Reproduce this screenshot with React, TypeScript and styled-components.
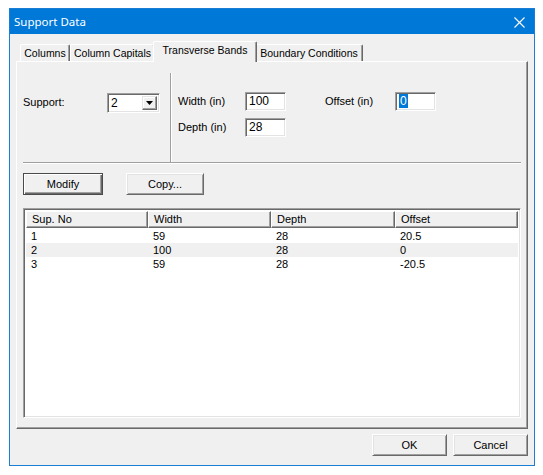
import styled, { createGlobalStyle } from "styled-components";

const Global = createGlobalStyle`
    html, body {
        margin: 0;
        background: #ffffff;
    }
    body {
        padding: 8px 9px;
        font-family: "Liberation Sans", Arial, sans-serif;
        font-size: 11px;
        color: #000;
    }
`;

type Row = { sup: string; width: string; depth: string; offset: string };

const rows: Row[] = [
    { sup: "1", width: "59", depth: "28", offset: "20.5" },
    { sup: "2", width: "100", depth: "28", offset: "0" },
    { sup: "3", width: "59", depth: "28", offset: "-20.5" },
];

const tabs = [
    { label: "Columns", w: 50 },
    { label: "Column Capitals", w: 85 },
    { label: "Transverse Bands", w: 104, active: true },
    { label: "Boundary Conditions", w: 108 },
];

const App = () => {
    return (
        <>
            <Global />
            <Window>
                <TitleBar>
                    <Title>Support Data</Title>
                    <CloseBtn>
                        <svg width="11" height="11" viewBox="0 0 11 11">
                            <path d="M0.5 0.5 L10.5 10.5 M10.5 0.5 L0.5 10.5" stroke="#fff" strokeWidth="1.1" />
                        </svg>
                    </CloseBtn>
                </TitleBar>
                <Body>
                    <TabStrip>
                        {tabs.map((t) => (
                            <Tab key={t.label} $w={t.w} $active={!!t.active}>
                                {t.label}
                            </Tab>
                        ))}
                    </TabStrip>
                    <Panel>
                        <TopSection>
                            <LeftPane>
                                <Label $w={84}>Support:</Label>
                                <Combo>
                                    <ComboText>2</ComboText>
                                    <DropBtn>
                                        <svg width="7" height="4" viewBox="0 0 7 4">
                                            <path d="M0 0 H7 L3.5 4 Z" fill="#000" />
                                        </svg>
                                    </DropBtn>
                                </Combo>
                            </LeftPane>
                            <VSep />
                            <RightPane>
                                <Label>Width (in)</Label>
                                <Field>100</Field>
                                <span />
                                <Label>Offset (in)</Label>
                                <Field>
                                    <Selected>0</Selected>
                                </Field>
                                <Label>Depth (in)</Label>
                                <Field>28</Field>
                            </RightPane>
                        </TopSection>
                        <HSep />
                        <ButtonRow>
                            <Button $w={80} $default>
                                Modify
                            </Button>
                            <Button $w={78}>Copy...</Button>
                        </ButtonRow>
                        <ListView>
                            <HeaderRow>
                                <HeaderCell>Sup. No</HeaderCell>
                                <HeaderCell>Width</HeaderCell>
                                <HeaderCell>Depth</HeaderCell>
                                <HeaderCell>Offset</HeaderCell>
                            </HeaderRow>
                            <ListBody>
                                {rows.map((r, i) => (
                                    <DataRow key={r.sup} $alt={i % 2 === 1}>
                                        <Cell>{r.sup}</Cell>
                                        <Cell>{r.width}</Cell>
                                        <Cell>{r.depth}</Cell>
                                        <Cell>{r.offset}</Cell>
                                    </DataRow>
                                ))}
                            </ListBody>
                        </ListView>
                    </Panel>
                    <Footer>
                        <Button $w={75}>OK</Button>
                        <Button $w={75}>Cancel</Button>
                    </Footer>
                </Body>
            </Window>
        </>
    );
};

const Window = styled.div`
    width: 526px;
    height: 458px;
    box-sizing: border-box;
    border: 1px solid #1a7fd4;
    background: #f0f0f0;
    display: flex;
    flex-direction: column;
`;

const TitleBar = styled.div`
    height: 25px;
    background: #0078d7;
    display: flex;
    align-items: center;
    justify-content: space-between;
    padding: 0 9px 0 4px;
`;

const Title = styled.span`
    font-family: "Noto Sans", "Liberation Sans", sans-serif;
    font-size: 11.5px;
    color: #fff;
    padding-bottom: 1px;
`;

const CloseBtn = styled.span`
    display: flex;
    align-items: center;
    margin-top: 1px;
`;

const Body = styled.div`
    flex: 1;
    display: flex;
    flex-direction: column;
    padding: 7px 6px 0 6px;
`;

const TabStrip = styled.div`
    display: flex;
    align-items: flex-end;
    height: 20px;
    padding-left: 4px;
    position: relative;
    z-index: 1;
`;

const Tab = styled.div<{ $w: number; $active: boolean }>`
    width: ${(p) => p.$w}px;
    height: ${(p) => (p.$active ? 21 : 17)}px;
    box-sizing: border-box;
    margin: ${(p) => (p.$active ? "0 -2px -1px -2px" : "0")};
    background: #f0f0f0;
    border-top: 1px solid #fff;
    border-left: 1px solid #fff;
    border-right: 1px solid #696969;
    box-shadow: inset -1px 0 0 #a0a0a0;
    border-radius: 2px 2px 0 0;
    display: flex;
    align-items: ${(p) => (p.$active ? "flex-start" : "center")};
    justify-content: center;
    padding-top: ${(p) => (p.$active ? "2px" : "0")};
    font-size: 10.5px;
    white-space: nowrap;
    position: relative;
    z-index: ${(p) => (p.$active ? 2 : 1)};
`;

const Panel = styled.div`
    width: 512px;
    height: 368px;
    box-sizing: border-box;
    border-top: 1px solid #fff;
    border-left: 1px solid #fff;
    border-right: 1px solid #696969;
    border-bottom: 1px solid #696969;
    box-shadow: inset -1px -1px 0 #a0a0a0;
    padding: 0 6px;
    display: flex;
    flex-direction: column;
`;

const TopSection = styled.div`
    display: flex;
    height: 100px;
`;

const LeftPane = styled.div`
    width: 147px;
    padding-top: 31px;
    display: flex;
    align-items: flex-start;
`;

const Label = styled.span<{ $w?: number }>`
    ${(p) => (p.$w ? `width: ${p.$w}px;` : "")}
    height: 19px;
    line-height: 19px;
    white-space: nowrap;
`;

const sunken = `
    box-sizing: border-box;
    background: #fff;
    border-top: 1px solid #a0a0a0;
    border-left: 1px solid #a0a0a0;
    border-right: 1px solid #fff;
    border-bottom: 1px solid #fff;
    box-shadow: inset 1px 1px 0 #696969, inset -1px -1px 0 #e3e3e3;
`;

const Combo = styled.div`
    ${sunken}
    width: 53px;
    height: 20px;
    display: flex;
    align-items: center;
    justify-content: space-between;
    padding: 0 2px 0 3px;
`;

const ComboText = styled.span`
    font-size: 12px;
`;

const DropBtn = styled.span`
    width: 15px;
    height: 14px;
    box-sizing: border-box;
    background: #f0f0f0;
    border-top: 1px solid #e3e3e3;
    border-left: 1px solid #e3e3e3;
    border-right: 1px solid #696969;
    border-bottom: 1px solid #696969;
    box-shadow: inset -1px -1px 0 #a0a0a0, inset 1px 1px 0 #fff;
    display: flex;
    align-items: center;
    justify-content: center;
`;

const VSep = styled.div`
    margin-top: 11px;
    width: 0;
    border-left: 1px solid #a0a0a0;
    border-right: 1px solid #fff;
`;

const RightPane = styled.div`
    padding: 30px 0 0 6px;
    display: grid;
    grid-template-columns: 67px 41px 39px 70px 41px;
    grid-template-rows: 19px 19px;
    row-gap: 7px;
    align-content: start;
`;

const Field = styled.div`
    ${sunken}
    height: 19px;
    padding: 0 3px;
    font-size: 12px;
    line-height: 17px;
`;

const Selected = styled.span`
    background: #0078d7;
    color: #fff;
    padding: 0 1px;
`;

const HSep = styled.div`
    height: 0;
    border-top: 1px solid #a0a0a0;
    border-bottom: 1px solid #fff;
`;

const ButtonRow = styled.div`
    display: flex;
    gap: 23px;
    margin-top: 9px;
`;

const Button = styled.div<{ $w: number; $default?: boolean }>`
    width: ${(p) => p.$w}px;
    height: 22px;
    box-sizing: border-box;
    background: #f0f0f0;
    display: flex;
    align-items: center;
    justify-content: center;
    border-top: 1px solid ${(p) => (p.$default ? "#4a4a4a" : "#fff")};
    border-left: 1px solid ${(p) => (p.$default ? "#4a4a4a" : "#fff")};
    border-right: 1px solid ${(p) => (p.$default ? "#4a4a4a" : "#696969")};
    border-bottom: 1px solid ${(p) => (p.$default ? "#4a4a4a" : "#696969")};
    box-shadow: ${(p) =>
        p.$default
            ? "inset 1px 1px 0 #fff, inset -1px -1px 0 #696969, inset -2px -2px 0 #a0a0a0"
            : "inset 1px 1px 0 #e3e3e3, inset -1px -1px 0 #a0a0a0"};
`;

const ListView = styled.div`
    ${sunken}
    margin-top: 13px;
    height: 210px;
    display: flex;
    flex-direction: column;
    padding: 2px 2px 0 2px;
`;

const columns = "122px 123px 124px 1fr";

const HeaderRow = styled.div`
    display: grid;
    grid-template-columns: ${columns};
`;

const HeaderCell = styled.div`
    height: 17px;
    box-sizing: border-box;
    background: #f0f0f0;
    border-top: 1px solid #fff;
    border-left: 1px solid #fff;
    border-right: 1px solid #696969;
    border-bottom: 1px solid #696969;
    box-shadow: inset -1px -1px 0 #a0a0a0;
    padding-left: 5px;
    line-height: 15px;
    white-space: nowrap;
`;

const ListBody = styled.div`
    padding-top: 1px;
`;

const DataRow = styled.div<{ $alt: boolean }>`
    display: grid;
    grid-template-columns: ${columns};
    height: 14px;
    background: ${(p) => (p.$alt ? "#f0f0f0" : "#fff")};
`;

const Cell = styled.span`
    padding-left: 5px;
    line-height: 14px;
`;

const Footer = styled.div`
    display: flex;
    justify-content: flex-end;
    gap: 6px;
    margin-top: 5px;
`;

export default App;
